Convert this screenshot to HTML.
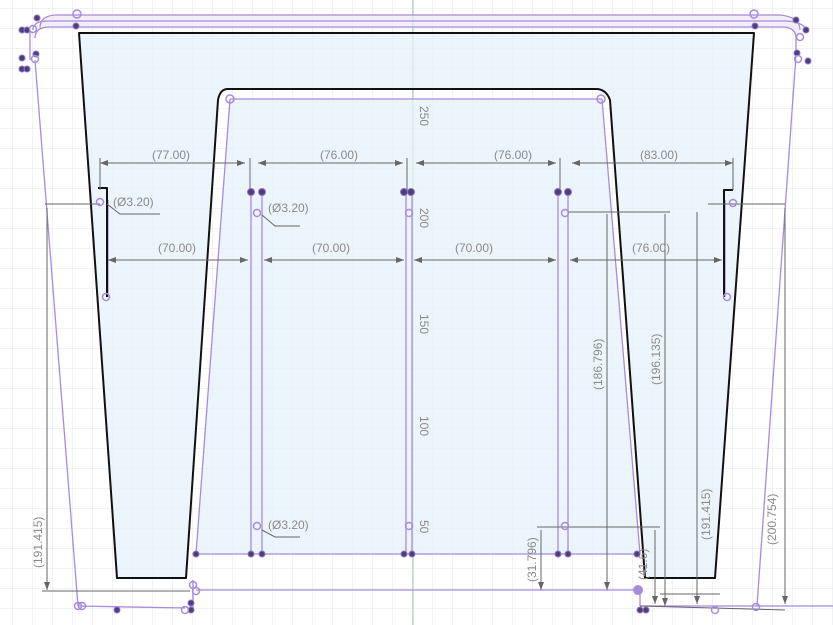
<!DOCTYPE html>
<html><head><meta charset="utf-8"><style>
html,body{margin:0;padding:0;background:#fff;}
svg{display:block;}
text{font-family:"Liberation Sans",sans-serif;font-size:12px;fill:#8a8a8a;}
</style></head><body>
<svg width="833" height="625" viewBox="0 0 833 625" xmlns="http://www.w3.org/2000/svg">
<defs>
<pattern id="g" width="20" height="20" patternUnits="userSpaceOnUse" x="12" y="8">
<path d="M0 0H20M0 0V20" stroke="#e0e4e8" stroke-width="1" fill="none"/>
</pattern>
<marker id="a" markerWidth="8" markerHeight="6" refX="8" refY="3" orient="auto-start-reverse"><path d="M0 0L8 3L0 6z" fill="#666"/></marker>
</defs>
<rect width="833" height="625" fill="#fff"/>
<rect width="833" height="625" fill="url(#g)"/>
<line x1="413" y1="0" x2="413" y2="625" stroke="#9fd49f" stroke-width="1"/>
<path d="M79 33 L754 33 L715 578 L645 578 L610 100 Q606 89 596 89 L228 89 Q220 89 218 100 L186 578 L117 578 Z" fill="#e6f2f9" opacity=".75"/>
<path d="M230 99 L602 99 L640 554 L196 554 Z" fill="#e6f2f9" opacity=".75"/>
<path d="M40 28 Q40 16 55 15 L780 15 Q800 17 800 30 L796 38 Q796 28 784 27 L50 27 Q35 27 35 38 Z" fill="#ece8f8" opacity=".7"/>
<g stroke="#a78bdf" stroke-width="1.3" fill="none">
<path d="M40 28 Q40 16 55 15 L780 15 Q800 17 800 30"/>
<path d="M33 30 Q33 21 48 21 L786 21 Q806 22 806 32"/>
<path d="M35 38 Q35 27 50 27 L784 27 Q796 28 796 38 L796 55"/>
<path d="M30 30 L30 60"/>
<path d="M35 60 L78 606"/>
<path d="M796 55 L757 606"/>
<path d="M230 99 L602 99"/>
<path d="M230 99 L196 554"/>
<path d="M602 99 L640 554"/>
<path d="M196 554 L640 554"/>
<path d="M251 190 V554 M262 190 V554 M406 190 V554 M412 190 V554 M558 190 V554 M568 190 V554"/>
<path d="M196 590 L640 590 M193 580 V608"/>
<path d="M78 606 L185 608 M640 606 L860 606"/>
<path d="M640 590 L640 606"/>
<path d="M108 200 L108 297 M725 200 L725 297"/>
</g>
<g stroke="#111" stroke-width="2" fill="none" stroke-linejoin="round">
<path d="M79 33 L754 33 L715 578 L645 578 L610 100 Q606 89 596 89 L228 89 Q220 89 218 100 L186 578 L117 578 Z"/>
<path d="M98 188 L107 188 L107 297 M724 297 L724 190 L733 190"/>
</g>
<g stroke="#666" stroke-width="1" fill="none">
<path d="M100 163 L245 163" marker-start="url(#a)" marker-end="url(#a)"/>
<path d="M258 163 L403 163" marker-start="url(#a)" marker-end="url(#a)"/>
<path d="M416 163 L556 163" marker-start="url(#a)" marker-end="url(#a)"/>
<path d="M572 163 L733 163" marker-start="url(#a)" marker-end="url(#a)"/>
<path d="M108 260 L248 260" marker-start="url(#a)" marker-end="url(#a)"/>
<path d="M264 260 L404 260" marker-start="url(#a)" marker-end="url(#a)"/>
<path d="M414 260 L556 260" marker-start="url(#a)" marker-end="url(#a)"/>
<path d="M570 260 L722 260" marker-start="url(#a)" marker-end="url(#a)"/>
<path d="M100 158 V190 M250 158 V190 M407 158 V190 M560 158 V190 M733 158 V190"/>
<path d="M45 204 L100 204 M47 208 V590" marker-end="url(#a)"/>
<path d="M42 591 L190 591"/>
<path d="M568 212 L615 212 M607 214 V590" marker-end="url(#a)"/>
<path d="M568 212 L670 212 M665 214 V606" marker-end="url(#a)"/>
<path d="M708 204 L785 204 M785 208 V604" marker-end="url(#a)"/>
<path d="M697 212 L697 604" marker-end="url(#a)"/>
<path d="M537 527 L660 527 M541 530 V590" marker-end="url(#a)" />
<path d="M655 530 V604" marker-end="url(#a)"/>
<path d="M660 594 L720 594 M640 606 L785 610"/>
<path d="M262 215 L275 226 L300 226 M262 530 L275 537 L300 537 M107 204 L120 214 L160 214"/>
</g>
<text x="152" y="159">(77.00)</text>
<text x="320" y="159">(76.00)</text>
<text x="494" y="159">(76.00)</text>
<text x="640" y="159">(83.00)</text>
<text x="158" y="252">(70.00)</text>
<text x="312" y="252">(70.00)</text>
<text x="455" y="252">(70.00)</text>
<text x="632" y="252">(76.00)</text>
<text x="113" y="206">(Ø3.20)</text>
<text x="268" y="212">(Ø3.20)</text>
<text x="268" y="529">(Ø3.20)</text>
<text transform="translate(42,568) rotate(-90)">(191.415)</text>
<text transform="translate(602,390) rotate(-90)">(186.796)</text>
<text transform="translate(660,385) rotate(-90)">(196.135)</text>
<text transform="translate(710,540) rotate(-90)">(191.415)</text>
<text transform="translate(776,545) rotate(-90)">(200.754)</text>
<text transform="translate(536,582) rotate(-90)">(31.796)</text>
<text transform="translate(647,580) rotate(-90)">(41.6)</text>
<text transform="translate(420,106) rotate(90)">250</text>
<text transform="translate(420,208) rotate(90)">200</text>
<text transform="translate(420,314) rotate(90)">150</text>
<text transform="translate(420,416) rotate(90)">100</text>
<text transform="translate(420,520) rotate(90)">50</text>
<g fill="#4e3f78" stroke="#8d75c9" stroke-width="1">
<circle cx="251" cy="192" r="3.5"/><circle cx="262" cy="192" r="3.5"/>
<circle cx="404" cy="192" r="3.5"/><circle cx="411" cy="192" r="3.5"/>
<circle cx="558" cy="192" r="3.5"/><circle cx="568" cy="192" r="3.5"/>
<circle cx="196" cy="554" r="3"/><circle cx="251" cy="554" r="3"/><circle cx="262" cy="554" r="3"/>
<circle cx="404" cy="554" r="3"/><circle cx="412" cy="554" r="3"/>
<circle cx="558" cy="554" r="3"/><circle cx="568" cy="554" r="3"/><circle cx="637" cy="554" r="3"/>
<circle cx="117" cy="610" r="3"/><circle cx="191" cy="603" r="3"/><circle cx="191" cy="610" r="3"/>
<circle cx="640" cy="610" r="3"/><circle cx="646" cy="610" r="3"/>
<circle cx="22" cy="30" r="3"/><circle cx="27" cy="30" r="3"/><circle cx="22" cy="58" r="3"/><circle cx="22" cy="69" r="3"/><circle cx="27" cy="69" r="3"/>
<circle cx="37" cy="18" r="3"/><circle cx="76" cy="26" r="3"/>
<circle cx="796" cy="20" r="3"/><circle cx="806" cy="30" r="3"/><circle cx="808" cy="61" r="3"/>
<circle cx="755" cy="26" r="3"/><circle cx="36" cy="54" r="3"/><circle cx="797" cy="53" r="3"/>
</g>
<g fill="none" stroke="#a78bdf" stroke-width="1.5">
<circle cx="77" cy="14" r="4"/><circle cx="754" cy="14" r="4"/>
<circle cx="230" cy="99" r="4"/><circle cx="601" cy="99" r="4"/>
<circle cx="409" cy="213" r="3.5"/><circle cx="565" cy="213" r="3.5"/><circle cx="409" cy="526" r="3.5"/><circle cx="565" cy="526" r="3.5"/>
<circle cx="257" cy="213" r="3.5"/><circle cx="257" cy="526" r="3.5"/><circle cx="100" cy="202" r="3.5"/><circle cx="733" cy="203" r="3.5"/>
<circle cx="193" cy="585" r="3.5"/><circle cx="196" cy="591" r="3.5"/>
<circle cx="78" cy="606" r="3.5"/><circle cx="82" cy="606" r="3.5"/><circle cx="185" cy="610" r="3.5"/>
<circle cx="715" cy="610" r="3.5"/><circle cx="756" cy="607" r="3.5"/>
<circle cx="33" cy="29" r="3.5"/><circle cx="35" cy="59" r="3.5"/><circle cx="800" cy="37" r="3.5"/><circle cx="798" cy="59" r="3.5"/>
<circle cx="106" cy="297" r="3.5"/><circle cx="727" cy="297" r="3.5"/>
</g>
<circle cx="638" cy="590" r="5" fill="#a78bdf"/>
</svg>
</body></html>
